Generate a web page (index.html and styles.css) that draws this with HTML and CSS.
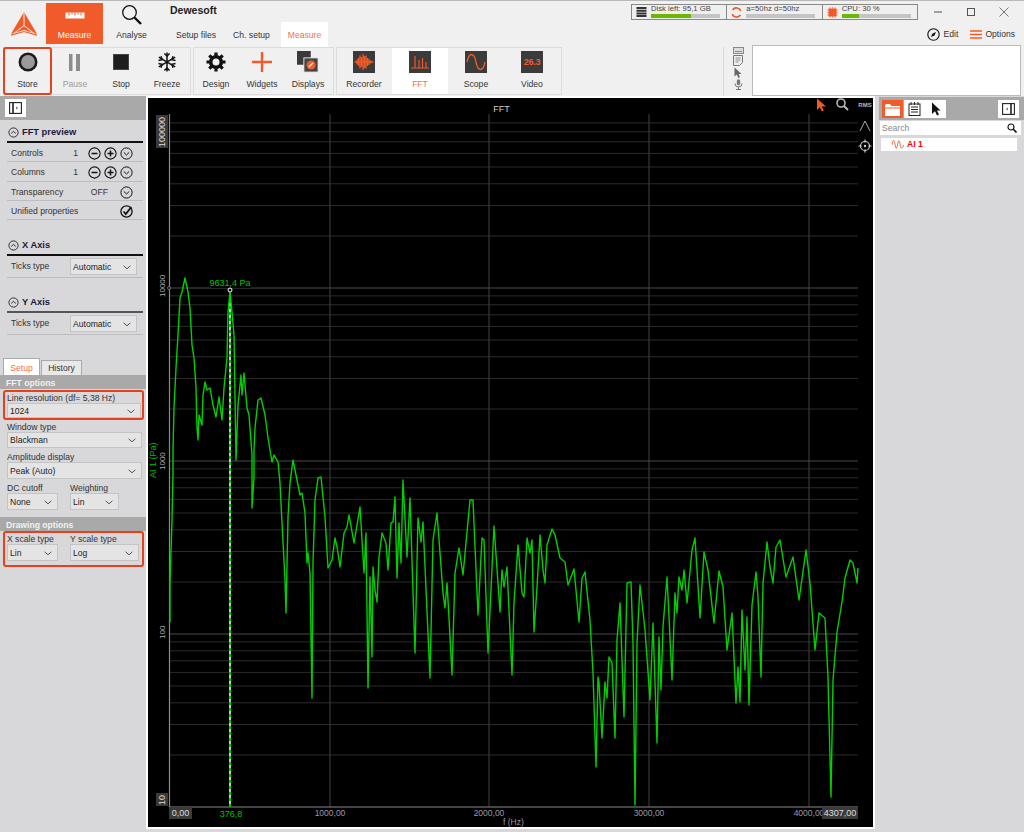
FILE: index.html
```html
<!DOCTYPE html>
<html lang="en">
<head>
<meta charset="utf-8">
<title>Dewesoft</title>
<link rel="stylesheet" href="styles.css">
</head>
<body>
<svg class="sprite" aria-hidden="true">
  <symbol id="minus" viewBox="0 0 13 13"><circle cx="6.5" cy="6.5" r="5.6" fill="none" stroke="#111" stroke-width="1.1"/><path d="M3.5 6.5h6" stroke="#111" stroke-width="1.5"/></symbol>
  <symbol id="plus" viewBox="0 0 13 13"><circle cx="6.5" cy="6.5" r="5.6" fill="none" stroke="#111" stroke-width="1.1"/><path d="M3.5 6.5h6M6.5 3.5v6" stroke="#111" stroke-width="1.5"/></symbol>
  <symbol id="down" viewBox="0 0 13 13"><circle cx="6.5" cy="6.5" r="5.6" fill="none" stroke="#111" stroke-width="1"/><path d="M3.8 5.4l2.7 2.6 2.7-2.6" fill="none" stroke="#111" stroke-width="1"/></symbol>
  <symbol id="up" viewBox="0 0 13 13"><circle cx="6.5" cy="6.5" r="4.6" fill="none" stroke="#222" stroke-width=".9"/><path d="M4.2 7.4l2.3-2 2.3 2" fill="none" stroke="#222" stroke-width=".9"/></symbol>
  <symbol id="chev" viewBox="0 0 8 5"><path d="M.6.8l3.4 3 3.4-3" fill="none" stroke="#555" stroke-width="1"/></symbol>
  <symbol id="dock" viewBox="0 0 13 12"><rect x=".6" y=".6" width="11.8" height="10.8" fill="none" stroke="#222" stroke-width="1.1"/><path d="M4 .6v10.8" stroke="#222" stroke-width="1.6"/><path d="M7 5l1.5 1L7 7" fill="none" stroke="#222" stroke-width=".7"/></symbol>
</svg>

<header class="header">
  <div class="toprow">
    <div class="logo">
      <svg width="26" height="24" viewBox="0 0 26 24"><path d="M13 0L26 22 13 18 0 22z" fill="#f15a29"/><path d="M13 .5V13.5M13 13.5L1.5 22.5M13 13.5L24.5 22.5" stroke="#f0f0f0" stroke-width="1"/><path d="M0 23.2L13 19.5 26 23.2" fill="none" stroke="#f15a29" stroke-width="1.2"/></svg>
    </div>
    <div class="mode mode-on">
      <svg width="20" height="7" viewBox="0 0 20 7"><rect x=".5" y=".5" width="19" height="6" fill="#fff"/><path d="M4 .5v3M7 .5v2M10 .5v3M13 .5v2M16 .5v3" stroke="#f15a29" stroke-width="1"/></svg>
      <span>Measure</span>
    </div>
    <div class="mode">
      <svg width="22" height="22" viewBox="0 0 22 22"><circle cx="8.5" cy="8.5" r="6.8" fill="none" stroke="#111" stroke-width="1.3"/><path d="M13.5 13.5L20 20" stroke="#111" stroke-width="2.4"/></svg>
      <span>Analyse</span>
    </div>
    <div class="title-col">
      <div class="app-title">Dewesoft</div>
      <div class="subtabs">
        <span>Setup files</span>
        <span>Ch. setup</span>
        <span class="sub-on">Measure</span>
      </div>
    </div>
    <div class="sys">
      <div class="sys-top">
        <div class="meters">
          <div class="meter">
            <svg class="meter-ic" width="10" height="10" viewBox="0 0 10 10"><path d="M0 1h10M0 3.7h10M0 6.4h10M0 9h10" stroke="#333" stroke-width="2"/></svg>
            <div class="meter-body"><div class="meter-txt">Disk left: 95,1 GB</div><div class="track"><div class="fill" style="width:58%"></div></div></div>
          </div>
          <div class="meter">
            <svg class="meter-ic" width="11" height="11" viewBox="0 0 11 11"><path d="M9.8 4A4.6 4.6 0 0 0 1.6 3M1.2 7a4.6 4.6 0 0 0 8.2 1" fill="none" stroke="#f15a29" stroke-width="1.6"/></svg>
            <div class="meter-body"><div class="meter-txt">a=50hz d=50hz</div><div class="track"></div></div>
          </div>
          <div class="meter">
            <svg class="meter-ic" width="11" height="11" viewBox="0 0 11 11"><rect x="1.5" y="1.5" width="8" height="8" fill="#f15a29"/><path d="M3 0v11M5.5 0v11M8 0v11M0 3h11M0 5.5h11M0 8h11" stroke="#f15a29" stroke-width=".6"/></svg>
            <div class="meter-body"><div class="meter-txt">CPU: 30 %</div><div class="track"><div class="fill" style="width:25%"></div></div></div>
          </div>
        </div>
        <div class="winbtns">
          <span class="winbtn"><svg width="10" height="10" viewBox="0 0 10 10"><path d="M1 5h8" stroke="#555"/></svg></span>
          <span class="winbtn"><svg width="10" height="10" viewBox="0 0 10 10"><rect x="1.5" y="1.5" width="7" height="7" fill="none" stroke="#555"/></svg></span>
          <span class="winbtn"><svg width="10" height="10" viewBox="0 0 10 10"><path d="M.5.5l9 9M9.5.5l-9 9" stroke="#555" stroke-width=".8"/></svg></span>
        </div>
      </div>
      <div class="sys-bot">
        <span class="act"><svg width="13" height="13" viewBox="0 0 13 13"><circle cx="6.5" cy="6.5" r="5.7" fill="none" stroke="#111" stroke-width="1.1"/><path d="M4 9l1.2-3.2L9 4 7.5 7.5z" fill="#111"/></svg>Edit</span>
        <span class="act act-opt"><svg width="12" height="9" viewBox="0 0 12 9"><path d="M0 1h12M0 4.5h12M0 8h12" stroke="#f15a29" stroke-width="1.4"/></svg>Options</span>
      </div>
    </div>
  </div>

  <div class="ribbon">
    <div class="group">
      <div class="rbtn rbtn-store">
        <svg class="ric" width="22" height="22" viewBox="0 0 22 22"><circle cx="11" cy="11" r="8.2" fill="#9a9a9a" stroke="#1a1a1a" stroke-width="2.6"/></svg>
        <span>Store</span>
      </div>
      <div class="rbtn rbtn-off">
        <svg class="ric" width="22" height="22" viewBox="0 0 22 22"><path d="M5 3h3.500v17H5zM12 3h4v17h-4z" fill="#8c8c8c"/></svg>
        <span>Pause</span>
      </div>
      <div class="rbtn">
        <svg class="ric" width="22" height="22" viewBox="0 0 22 22"><rect x="3.500" y="3.500" width="15" height="15" fill="#1d1d1d" stroke="#444"/></svg>
        <span>Stop</span>
      </div>
      <div class="rbtn">
        <svg class="ric" width="22" height="22" viewBox="0 0 22 22"><g fill="none" stroke="#111" stroke-width="1.5"><path d="M11 1.5v19M2.8 6.2l16.4 9.6M2.8 15.8l16.4-9.6"/><path d="M8.4 2.5L11 5l2.6-2.5M8.4 19.5L11 17l2.6 2.5M2.5 9.6l3.5-.9L5 5.2M19.5 9.6L16 8.7l1-3.5M2.5 12.4l3.5.9-1 3.5M19.5 12.4l-3.500.9 1 3.5"/></g></svg>
        <span>Freeze</span>
      </div>
    </div>
    <div class="group group-b">
      <div class="rbtn">
        <svg class="ric" width="22" height="22" viewBox="0 0 22 22"><circle cx="11" cy="11" r="5.300" fill="none" stroke="#111" stroke-width="3.600"/><path d="M11 1.500v4M11 16.500v4M1.500 11h4M16.500 11h4M4.300 4.300l2.800 2.800M14.900 14.900l2.800 2.800M4.300 17.700l2.800-2.800M14.900 7.100l2.800-2.800" stroke="#111" stroke-width="3.200"/></svg>
        <span>Design</span>
      </div>
      <div class="rbtn">
        <svg class="ric" width="22" height="22" viewBox="0 0 22 22"><path d="M11 1v20M1 11h20" stroke="#f15a29" stroke-width="2.400"/></svg>
        <span>Widgets</span>
      </div>
      <div class="rbtn">
        <svg class="ric" width="24" height="24" viewBox="0 0 24 24"><rect x="0" y="0" width="15" height="15" fill="#3a3a3a"/><rect x="7.500" y="7.500" width="15.500" height="15.500" fill="#444" stroke="#eee" stroke-width="1"/><circle cx="15.300" cy="15.300" r="5" fill="#f15a29"/><path d="M13 17.500l4.500-4.500" stroke="#fff" stroke-width="1.400"/></svg>
        <span>Displays</span>
      </div>
    </div>
    <div class="group group-c">
      <div class="rbtn rbtn-w">
        <svg class="ric" width="22" height="22" viewBox="0 0 22 22"><rect width="22" height="22" fill="#3b3b3b"/><path d="M1.500 11h19M4 8.500v5M5.500 7v8M7 4.500v13M8.500 6v10M10 3v16M11.500 5v12M13 4.500v13M14.500 7v8M16 8v6M17.500 9.500v3" stroke="#f15a29" stroke-width="1.300"/></svg>
        <span>Recorder</span>
      </div>
      <div class="rbtn rbtn-w rbtn-on">
        <svg class="ric" width="22" height="22" viewBox="0 0 22 22"><rect width="22" height="22" fill="#3b3b3b"/><path d="M2 17h18M6 17V5M10 17V9M13.500 17V7M17 17v-6" stroke="#f15a29" stroke-width="1.200" fill="none"/></svg>
        <span>FFT</span>
      </div>
      <div class="rbtn rbtn-w">
        <svg class="ric" width="22" height="22" viewBox="0 0 22 22"><rect width="22" height="22" fill="#3b3b3b"/><path d="M2 11C4 1 9 1 11 11S18 21 20 11" stroke="#f15a29" stroke-width="1.300" fill="none"/></svg>
        <span>Scope</span>
      </div>
      <div class="rbtn rbtn-w">
        <span class="vid ric">26.3</span>
        <span>Video</span>
      </div>
    </div>
    <div class="tools">
      <svg width="11" height="7" viewBox="0 0 11 7"><rect x=".5" y=".5" width="10" height="6" fill="#ddd" stroke="#888"/><path d="M2 4.500h7" stroke="#888"/></svg>
      <svg width="10" height="11" viewBox="0 0 10 11"><path d="M.5.500h9v7l-3 3h-6z" fill="#eee" stroke="#777"/><path d="M2.500 3h5M2.500 5h5M2.500 7h3" stroke="#777" stroke-width=".8"/></svg>
      <svg width="8" height="11" viewBox="0 0 8 11"><path d="M.5.500v9l2.200-2L4.500 11 6 10 4.500 7H7.500z" fill="#666"/></svg>
      <svg width="9" height="11" viewBox="0 0 9 11"><rect x="2.800" y=".3" width="3.400" height="6" rx="1.700" fill="#777"/><path d="M1 4.500a3.500 3.500 0 0 0 7 0M4.500 8v2.500M2 10.500h5" fill="none" stroke="#777"/></svg>
    </div>
    <div class="notes"></div>
  </div>
</header>

<main class="main">
  <aside class="left">
    <div class="bar"><span class="barbtn"><svg width="13" height="12"><use href="#dock"/></svg></span></div>

    <div class="sec-head"><svg width="13" height="13"><use href="#up"/></svg><b>FFT preview</b></div>
    <div class="row"><span class="lab">Controls</span><span class="val">1</span><span class="icons"><svg width="13" height="13"><use href="#minus"/></svg><svg width="13" height="13"><use href="#plus"/></svg><svg width="13" height="13"><use href="#down"/></svg></span></div>
    <div class="row"><span class="lab">Columns</span><span class="val">1</span><span class="icons"><svg width="13" height="13"><use href="#minus"/></svg><svg width="13" height="13"><use href="#plus"/></svg><svg width="13" height="13"><use href="#down"/></svg></span></div>
    <div class="row"><span class="lab">Transparency</span><span class="val val-off">OFF</span><span class="icons"><svg width="13" height="13"><use href="#down"/></svg></span></div>
    <div class="row"><span class="lab">Unified properties</span><span class="icons"><svg width="13" height="13" viewBox="0 0 13 13"><circle cx="6.500" cy="6.500" r="5.600" fill="none" stroke="#111" stroke-width="1.300"/><path d="M3.500 6.500l2.300 2.500 5.500-7" fill="none" stroke="#111" stroke-width="1.800"/></svg></span></div>

    <div class="sec-head sec-x"><svg width="13" height="13"><use href="#up"/></svg><b>X Axis</b></div>
    <div class="row row-sel"><span class="lab">Ticks type</span><div class="sel sel-ticks"><span>Automatic</span><svg width="8" height="5"><use href="#chev"/></svg></div></div>

    <div class="sec-head sec-y"><svg width="13" height="13"><use href="#up"/></svg><b>Y Axis</b></div>
    <div class="row row-sel"><span class="lab">Ticks type</span><div class="sel sel-ticks"><span>Automatic</span><svg width="8" height="5"><use href="#chev"/></svg></div></div>

    <div class="tabs"><span class="tab tab-on">Setup</span><span class="tab">History</span></div>
    <div class="optbar">FFT options</div>
    <div class="hl hl-line">
      <div class="flab">Line resolution (df= 5,38 Hz)</div>
      <div class="sel"><span>1024</span><svg width="8" height="5"><use href="#chev"/></svg></div>
    </div>
    <div class="field">
      <div class="flab">Window type</div>
      <div class="sel"><span>Blackman</span><svg width="8" height="5"><use href="#chev"/></svg></div>
    </div>
    <div class="field field-amp">
      <div class="flab">Amplitude display</div>
      <div class="sel"><span>Peak (Auto)</span><svg width="8" height="5"><use href="#chev"/></svg></div>
    </div>
    <div class="field field-amp pair">
      <div class="pair-a"><div class="flab">DC cutoff</div><div class="sel"><span>None</span><svg width="8" height="5"><use href="#chev"/></svg></div></div>
      <div class="pair-b pair-w"><div class="flab">Weighting</div><div class="sel"><span>Lin</span><svg width="8" height="5"><use href="#chev"/></svg></div></div>
    </div>
    <div class="optbar optbar-d">Drawing options</div>
    <div class="hl hl-scale pair">
      <div class="pair-a"><div class="flab">X scale type</div><div class="sel"><span>Lin</span><svg width="8" height="5"><use href="#chev"/></svg></div></div>
      <div class="pair-b"><div class="flab">Y scale type</div><div class="sel"><span>Log</span><svg width="8" height="5"><use href="#chev"/></svg></div></div>
    </div>
  </aside>

  <section class="plot">
    <svg class="chart" width="725" height="729" viewBox="148 98 725 729">
      <path d="M169 122.900H858M169 131.800H858M169 141.800H858M169 153.400H858M169 167H858M169 183.800H858M169 205.500H858M169 236H858
               M169 295.900H858M169 304.800H858M169 314.800H858M169 326.400H858M169 340H858M169 356.800H858M169 378.500H858M169 409H858
               M169 468.900H858M169 477.800H858M169 487.800H858M169 499.400H858M169 513H858M169 529.800H858M169 551.500H858M169 582H858
               M169 641.900H858M169 650.800H858M169 660.800H858M169 672.400H858M169 686H858M169 702.800H858M169 724.500H858M169 755H858" stroke="#2b2b2b" stroke-width="1" fill="none"/>
      <path d="M330 114V807M489 114V807M649 114V807M809 114V807" stroke="#383838" stroke-width="1.200" fill="none"/>
      <path d="M169 288H858M169 461H858M169 634H858" stroke="#4a4a4a" stroke-width="1.200" fill="none"/>
      <path d="M169.500 114V807M169 807H858" stroke="#8a8a8a" stroke-width="1.200" fill="none"/>

      <path d="M230 294V807" stroke="#c8c8c8" stroke-width="2"/>
      <path d="M230 294V807" stroke="#00c800" stroke-width="2" stroke-dasharray="3 3"/>

      <polyline class="curve" points="170,622 170,583 172,520 173,473 173,450 174,408 176,368 178,335 180,298 182,292 185,278 188,292 190,308 192,345 194,358 196,388 197,428 198,440 199,415 202,425 203,395 205,382 207,390 210,388 213,405 216,417 219,397 222,420 224,388 227,358 228,312 230,292 232,312 234,335 236,460 238,405 241,375 242,395 244,373 247,408 249,415 252,455 252,508 254,477 254,450 255,428 258,400 261,398 265,415 268,438 272,462 274,455 278,462 280,483 282,523 285,580 286,613 288,517 290,483 293,460 297,480 300,495 302,493 305,513 307,563 308,553 310,573 312,698 313,563 315,500 318,478 321,477 325,517 328,568 332,560 335,538 337,547 338,553 340,567 344,533 347,527 349,515 354,543 357,525 360,507 364,573 366,533 368,688 370,577 372,657 373,567 375,590 377,602 379,557 382,533 386,543 388,570 391,523 393,522 395,497 397,578 399,523 401,563 403,480 407,557 410,498 415,653 418,518 421,542 423,522 430,678 433,540 437,513 443,593 445,608 447,583 449,618 452,675 455,573 459,548 463,575 470,500 473,500 478,615 482,538 484,540 488,653 494,526 500,612 502,570 504,587 507,567 512,675 514,603 518,545 522,593 524,597 527,538 530,553 532,540 534,632 537,587 540,535 543,570 545,583 547,545 552,529 555,535 560,558 565,562 568,585 574,569 579,622 582,578 585,572 590,620 593,673 596,767 598,677 599,683 602,738 605,682 607,698 609,657 612,663 615,738 617,640 620,603 624,717 627,583 631,582 633,643 635,805 637,643 640,585 645,630 650,700 653,623 657,743 659,637 661,690 663,627 667,577 669,617 672,680 675,593 677,613 679,577 682,590 684,570 687,603 692,550 695,538 700,618 704,552 708,570 714,623 719,571 723,587 727,650 732,613 736,703 738,667 740,702 742,610 745,670 747,617 749,705 752,605 756,572 758,597 761,677 763,583 767,542 770,567 773,583 776,547 780,540 786,577 793,557 799,600 806,550 810,583 815,650 819,613 825,618 828,677 831,797 833,680 837,632 842,602 845,578 850,560 853,563 857,583 858,568"/>

      <rect x="211" y="278" width="40" height="10" fill="#000"/>
      <text class="t-green" x="230" y="286" text-anchor="middle">9631,4 Pa</text>
      <circle cx="230" cy="290" r="2" fill="#000" stroke="#fff" stroke-width="1"/>
      <circle cx="169" cy="288" r="1.500" fill="#000" stroke="#888" stroke-width=".8"/>

      <text class="t-title" x="501.500" y="112" text-anchor="middle">FFT</text>

      <rect x="156" y="115" width="12" height="33" fill="#3a3a3a"/>
      <text class="t-y" transform="translate(165,147) rotate(-90)">100000</text>
      <text class="t-yd" transform="translate(165,297) rotate(-90)">10000</text>
      <text class="t-yd" transform="translate(165,470) rotate(-90)">1000</text>
      <text class="t-yd" transform="translate(165,639) rotate(-90)">100</text>
      <rect x="156" y="793" width="12" height="13" fill="#3a3a3a"/>
      <text class="t-y" transform="translate(165,805) rotate(-90)">10</text>
      <text class="t-gy" transform="translate(156,478) rotate(-90)">AI 1 (Pa)</text>

      <rect x="169" y="807" width="23" height="12" fill="#3a3a3a"/>
      <text class="t-x" x="180.500" y="816" text-anchor="middle">0,00</text>
      <text class="t-gx" x="231" y="816.500" text-anchor="middle">376,8</text>
      <text class="t-xd" x="330" y="816" text-anchor="middle">1000,00</text>
      <text class="t-xd" x="489" y="816" text-anchor="middle">2000,00</text>
      <text class="t-xd" x="649" y="816" text-anchor="middle">3000,00</text>
      <text class="t-xd" x="809" y="816" text-anchor="middle">4000,00</text>
      <rect x="822" y="807" width="36" height="12" fill="#3a3a3a"/>
      <text class="t-x" x="840" y="816" text-anchor="middle">4307,00</text>
      <text class="t-xd" x="503" y="825">f (Hz)</text>

      <path d="M817 98.500V110l2.800-2.800L822 111.500l1.800-1-2-4H826z" fill="#f15a29"/>
      <circle cx="841" cy="103" r="4" fill="none" stroke="#bbb" stroke-width="1.600"/>
      <path d="M844 106l4 4" stroke="#bbb" stroke-width="2"/>
      <text class="t-rms" x="865" y="107" text-anchor="middle">RMS</text>
      <path d="M860 131L865 121 870 131" fill="none" stroke="#aaa" stroke-width="1"/>
      <circle cx="865" cy="146" r="4.500" fill="none" stroke="#ccc" stroke-width="1.200"/>
      <circle cx="865" cy="146" r="1.200" fill="#ccc"/>
      <path d="M865 139.500v3M865 149.500v3M858.500 146h3M868.500 146h3" stroke="#ccc" stroke-width="1.200"/>
    </svg>
  </section>

  <aside class="right">
    <div class="rbar">
      <span class="barbtn barbtn-o"><svg width="15" height="13" viewBox="0 0 15 13"><path d="M0 2.500V13h15V3H6.500L5 1H1z" fill="#fff"/><path d="M0 5h15" stroke="#f15a29"/></svg></span>
      <span class="barbtn"><svg width="13" height="14" viewBox="0 0 13 14"><rect x="1" y="2" width="11" height="11.500" fill="none" stroke="#222"/><path d="M3 5h7M3 7.500h7M3 10h7" stroke="#222"/><path d="M3 0v3M6.500 0v3M10 0v3" stroke="#222"/></svg></span>
      <span class="barbtn"><svg width="10" height="14" viewBox="0 0 10 14"><path d="M1 .5V12l3-2.800L6 13.500l2-1-2-4h3.500z" fill="#111"/></svg></span>
      <span class="barbtn barbtn-end"><svg width="13" height="12" viewBox="0 0 13 12"><g transform="matrix(-1 0 0 1 13 0)"><use href="#dock"/></g></svg></span>
    </div>
    <div class="search"><span>Search</span><svg width="10" height="10" viewBox="0 0 10 10"><circle cx="4" cy="4" r="3" fill="none" stroke="#111" stroke-width="1.200"/><path d="M6.300 6.300L9.500 9.500" stroke="#111" stroke-width="1.600"/></svg></div>
    <div class="chan">
      <svg width="12" height="9" viewBox="0 0 12 9"><path d="M0 5C1 -1 2 -1 3 4S4.500 10 5.500 5 7 -1 8 4 9.500 10 12 5" fill="none" stroke="#f15a29" stroke-width=".9"/></svg>
      <b>AI 1</b>
    </div>
  </aside>
</main>
</body>
</html>
```

FILE: styles.css
```css
* { box-sizing: border-box; }
html, body { margin: 0; padding: 0; }
body {
  width: 1024px;
  height: 832px;
  overflow: hidden;
  background: #d8d7da;
  color: #333;
  font: 8.600px/11px "Liberation Sans", Arial, sans-serif;
  display: flex;
  flex-direction: column;
}
.sprite { display: none; }
svg { display: block; flex: none; }

/* header */
.header { height: 96px; background: #f0f0f0; border-top: 1px solid #b8b8b8; flex: none; }
.toprow { display: flex; height: 44px; }
.logo { width: 46px; padding: 11px 0 0 11px; }
.mode { width: 57px; height: 41px; margin-top: 2px; display: flex; flex-direction: column; align-items: center; justify-content: flex-end; padding-bottom: 3px; }
.mode span { line-height: 11px; height: 11px; }
.mode svg { margin-bottom: 4px; }
.mode-on { background: #f15a29; color: #fff; }
.mode-on svg { margin-bottom: 11px; }
.title-col { margin-left: 10px; width: 158px; }
.app-title { font-weight: bold; font-size: 10.500px; height: 21px; padding-top: 4px; line-height: 11px; color: #222; }
.subtabs { display: grid; grid-template-columns: 52px 59px 47px; height: 22px; }
.subtabs span { text-align: center; line-height: 26px; }
.subtabs .sub-on { background: #fff; color: #f0704a; }

.sys { width: 393px; margin-left: auto; padding-top: 3px; }
.sys-top { display: flex; }
.meters { display: flex; width: 287px; height: 16px; border: 1px solid #888; background: #efefef; }
.meter { flex: 1; display: flex; align-items: center; padding-left: 4px; border-right: 1px solid #888; }
.meter:last-child { border-right: 0; }
.meter-ic { width: 11px; margin-right: 4px; }
.meter-body { width: 69px; align-self: flex-start; }
.meter-txt { font-size: 7.700px; line-height: 7px; height: 9px; color: #444; }
.track { height: 3.500px; background: #c4c4c4; }
.fill { height: 3.500px; background: #6cb800; }
.winbtns { display: flex; margin-left: 3px; }
.winbtn { width: 33px; height: 16px; display: flex; align-items: center; justify-content: center; }
.sys-bot { display: flex; justify-content: flex-end; align-items: center; gap: 12px; padding-right: 9px; margin-top: 7px; height: 14px; }
.act { display: flex; align-items: center; gap: 4px; }
.act-opt { gap: 3px; }

/* ribbon */
.ribbon { display: flex; height: 51px; padding-left: 3px; }
.group { display: flex; height: 48px; margin-top: 2px; border: 1px solid #dcdcdc; }
.group-b { margin-left: 2px; padding-right: 2px; }
.group-b .rbtn:first-child { margin-left: -1px; }
.group-c { margin-left: 2px; padding-right: 1px; }
.group-c .rbtn:first-child { margin-left: -1px; }
.rbtn { width: 46px; height: 46px; display: flex; flex-direction: column; align-items: center; padding-top: 3px; }
.rbtn > span:last-child { margin-top: 6px; line-height: 10px; }
.ric { height: 22px; }
.rbtn-store { width: 49px; height: 48px; margin: -1px 0 -1px -1px; border: 2px solid #e8401c; border-radius: 3px; padding-top: 2px; }
.rbtn-off { color: #999; }
.rbtn-w { width: 56px; }
.rbtn-on { background: #fff; color: #f0704a; }
.vid { width: 22px; background: #3b3b3b; color: #f15a29; font: bold 9px/22px "Liberation Sans", sans-serif; text-align: center; letter-spacing: -.2px; }
.tools { margin-left: auto; width: 29px; height: 49px; margin-top: 2px; border-left: 1px solid #d8d8d8; display: flex; flex-direction: column; align-items: center; gap: 1px; }
.notes { width: 269px; height: 51px; margin-right: 3px; background: #fff; border: 1px solid #bbb; }

/* main */
.main { flex: 1; display: flex; min-height: 0; }
.left { width: 146px; flex: none; background: #d8d7da; }
.bar { height: 24px; background: #a9a9a9; padding: 3px 5px; }
.barbtn { width: 21px; height: 18px; background: #fff; display: flex; align-items: center; justify-content: center; }
.sec-head { height: 23px; margin: 0 3px 0 7px; padding-top: 3px; border-bottom: 2px solid #111; display: flex; align-items: center; gap: 2px; font-size: 9.300px; color: #1a1a3a; }
.sec-x { margin-top: 13px; }
.sec-y { margin-top: 12px; border-bottom-color: #555; }
.row { height: 19.250px; margin: 0 3px 0 7px; padding: 3px 10px 0 4px; border-bottom: 1px solid #bdbcc0; display: flex; align-items: center; }
.lab { flex: 1; }
.val { margin-right: 10px; }
.val-off { margin-right: 12px; }
.icons { display: flex; gap: 3px; }
.row-sel { height: 22px; padding: 0 6px 0 4px; }
.sel { height: 16px; background: #e4e4e4; border: 1px solid #c4c4c4; display: flex; align-items: center; justify-content: space-between; padding: 1px 5px 0 2px; color: #222; }
.sel-ticks { width: 67px; height: 17px; }
.tabs { display: flex; margin: 23px 0 0 3px; height: 17px; gap: 1px; align-items: flex-end; }
.tab { width: 41px; height: 15px; background: #e8e8e8; border: 1px solid #aaa; border-bottom: 0; text-align: center; line-height: 15px; }
.tab-on { width: 37px; height: 17px; background: #fff; color: #f0704a; line-height: 18px; }
.optbar { height: 14px; background: #a9a9a9; color: #f2f2f2; font-weight: bold; padding-left: 6px; line-height: 16px; }
.optbar-d { margin-top: 7px; }
.hl { margin: 0 2px 0 3px; border: 2px solid #e8401c; border-radius: 3px; padding: 0 1px 0 2px; }
.hl-line { margin-top: 1px; height: 30px; }
.hl-scale { height: 36px; }
.flab { height: 11px; line-height: 12px; color: #333; }
.hl-line .sel { height: 15px; }
.field { margin: 1px 4px 0 7px; }
.field-amp { margin-top: 3px; }
.field-amp .sel { height: 17px; }
.pair { display: flex; }
.pair-a { width: 51px; margin-right: 12px; }
.pair-b { width: 69px; }
.pair-w { width: 49px; }
.pair .sel { height: 17px; }

.plot { width: 729px; height: 733px; flex: none; border: 2px solid #fff; background: #000; margin-right: 1px; }
.chart text { font-family: "Liberation Sans", Arial, sans-serif; font-size: 9px; }
.curve { fill: none; stroke: #00d000; stroke-width: 1.400; stroke-linejoin: round; }
.chart .t-green { fill: #00c000; }
.chart .t-title { fill: #ccc; }
.chart .t-y { fill: #ddd; }
.chart .t-yd { fill: #b0b0b0; font-size: 8px; }
.chart .t-gy { fill: #00c000; font-size: 9px; }
.chart .t-x { fill: #ddd; }
.chart .t-gx { fill: #00c000; }
.chart .t-xd { fill: #9a9aa8; font-size: 8.500px; }
.chart .t-rms { fill: #bbb; font-size: 6px; font-weight: bold; }

.right { flex: 1; padding-left: 3px; }
.rbar { height: 23px; margin-top: 1px; background: #a9a9a9; display: flex; padding: 3px 5px 2px 3px; }
.rbar .barbtn + .barbtn { margin-left: .5px; }
.rbar .barbtn-o { background: #f15a29; }
.rbar .barbtn + .barbtn-end { margin-left: auto; }
.search { height: 14px; margin: 1px 3px 0 1px; background: #fff; display: flex; align-items: center; justify-content: space-between; padding: 0 4px 0 2px; color: #888; }
.chan { height: 13px; margin: 3px 7px 0 2px; background: #fff; display: flex; align-items: center; padding-left: 11px; gap: 3px; }
.chan b { color: #f00; }
```
